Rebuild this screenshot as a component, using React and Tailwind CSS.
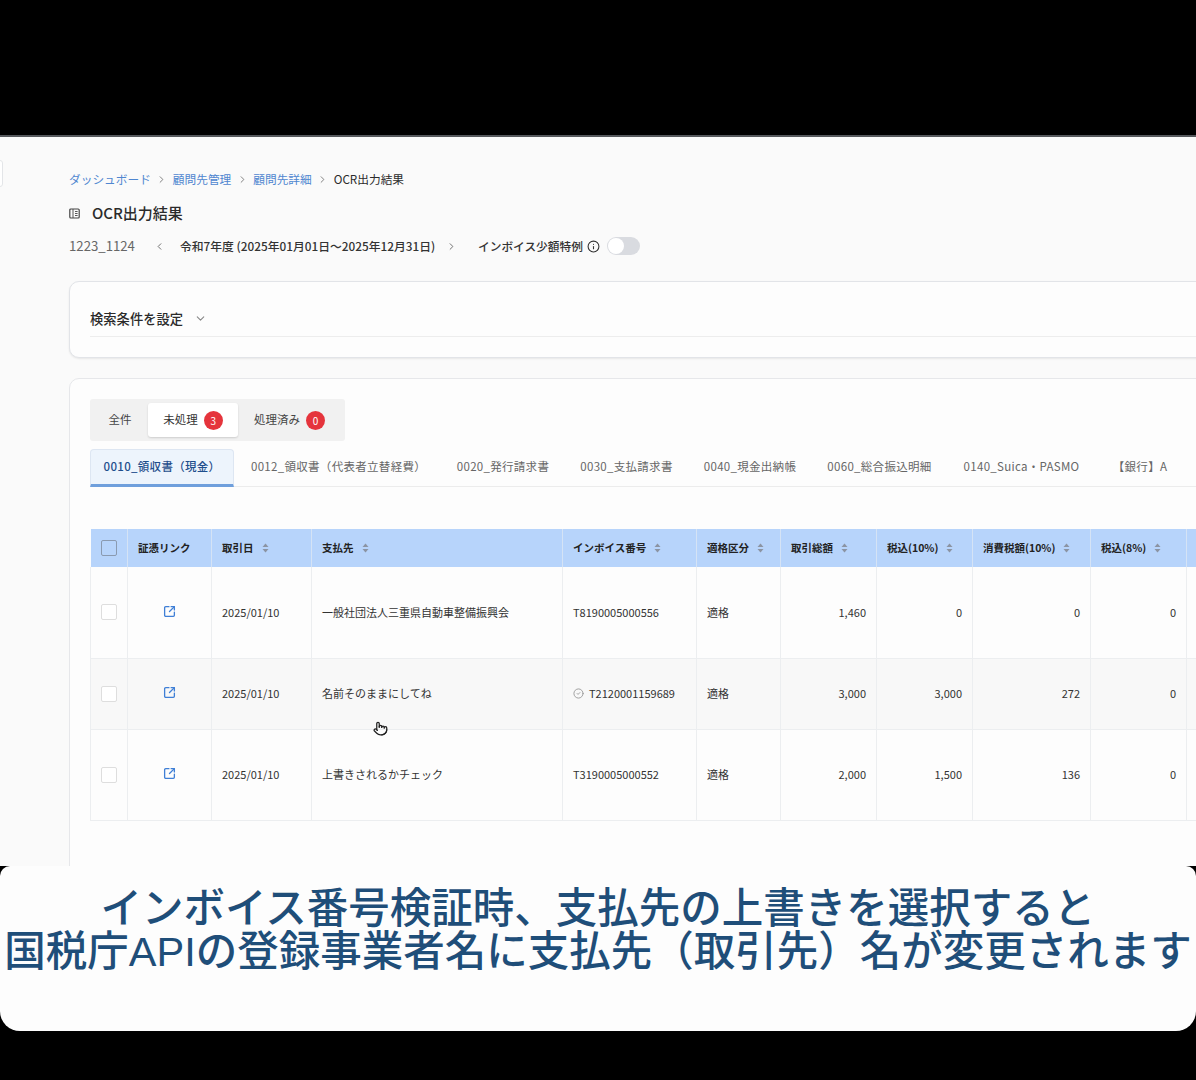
import React from 'react';
import { ChevronRight, ChevronLeft, ChevronDown, Info, CircleCheck, Pointer, SquareArrowOutUpRight } from 'lucide-react';

const columns = [
  { label: '', width: 'w-[37px]' },
  { label: '証憑リンク', width: 'w-[84px]' },
  { label: '取引日', width: 'w-[100px]', sort: true },
  { label: '支払先', width: 'w-[251px]', sort: true },
  { label: 'インボイス番号', width: 'w-[134px]', sort: true },
  { label: '適格区分', width: 'w-[84px]', sort: true },
  { label: '取引総額', width: 'w-[96px]', sort: true },
  { label: '税込(10%)', width: 'w-[96px]', sort: true },
  { label: '消費税額(10%)', width: 'w-[118px]', sort: true },
  { label: '税込(8%)', width: 'w-[96px]', sort: true },
  { label: '', width: 'w-[120px]' },
];

const rows = [
  { height: 'h-[91px]', bg: '', payee: '一般社団法人三重県自動車整備振興会', invoice: 'T8190005000556', total: '1,460', tax10: '0', ctax10: '0', tax8: '0' },
  { height: 'h-[71px]', bg: 'bg-[#f8f8f8]', payee: '名前そのままにしてね', invoice: 'T2120001159689', verified: true, total: '3,000', tax10: '3,000', ctax10: '272', tax8: '0' },
  { height: 'h-[91px]', bg: '', payee: '上書きされるかチェック', invoice: 'T3190005000552', total: '2,000', tax10: '1,500', ctax10: '136', tax8: '0' },
];

const docTabs = [
  { label: '0012_領収書（代表者立替経費）', width: 'w-[203px] pl-[6px]' },
  { label: '0020_発行請求書', width: 'w-[132px]' },
  { label: '0030_支払請求書', width: 'w-[115px]' },
  { label: '0040_現金出納帳', width: 'w-[132px]' },
  { label: '0060_総合振込明細', width: 'w-[127px]' },
  { label: '0140_Suica・PASMO', width: 'w-[157px]' },
  { label: '【銀行】A', width: 'w-[80px]' },
];

const SortIcon = () => (
  <svg width="7" height="10" viewBox="0 0 7 10" className="ml-2 shrink-0">
    <path d="M3.5 0.5 L6.5 4 H0.5 Z" fill="#8b94a3" />
    <path d="M3.5 9.5 L6.5 6 H0.5 Z" fill="#8b94a3" />
  </svg>
);

const TitleIcon = () => (
  <svg width="11" height="11" viewBox="0 0 11 11" fill="none" stroke="#444" strokeWidth="1.2">
    <rect x="0.8" y="1" width="9.4" height="9" rx="1" />
    <path d="M4 1v9M6 3.5h2.6M6 5.5h2.6M6 7.5h2.6" strokeWidth="0.9" />
  </svg>
);

const Badge = ({ n }) => (
  <span className="ml-[6px] w-[19px] h-[19px] rounded-full bg-[#e5343c] text-white text-[10px] flex items-center justify-center">{n}</span>
);

const App = () => {
  return (
    <div className="w-[1196px] h-[1080px] bg-black overflow-hidden pt-[135px] font-['Noto_Sans_CJK_JP','Noto_Sans',sans-serif]">
      <div className="h-[896px] rounded-b-[20px] overflow-hidden flex flex-col border-t-2 border-[#55585c]">
        {/* screen recording */}
        <div className="relative h-[729px] shrink-0 overflow-hidden bg-[#fafafa] pl-[69px] pt-[34px]">
          <div className="absolute left-[-8px] top-[23px] w-[11px] h-[27px] rounded-[3px] border border-[#e3e5e8] bg-white" />

          <nav className="h-4 flex items-center text-[11.7px] leading-4">
            <span className="text-[#4f86d0]">ダッシュボード</span>
            <ChevronRight size={11} className="mx-[5.5px] text-[#777]" />
            <span className="text-[#4f86d0]">顧問先管理</span>
            <ChevronRight size={11} className="mx-[5.5px] text-[#777]" />
            <span className="text-[#4f86d0]">顧問先詳細</span>
            <ChevronRight size={11} className="mx-[5.5px] text-[#777]" />
            <span className="text-[#2b2b2b]">OCR出力結果</span>
          </nav>

          <div className="mt-[14px] h-6 flex items-center">
            <TitleIcon />
            <h1 className="ml-3 text-[15px] font-medium text-[#2b2b2b]">OCR出力結果</h1>
          </div>

          <div className="mt-[11px] h-5 flex items-center">
            <span className="w-[85px] text-[13.2px] text-[#666]">1223_1124</span>
            <ChevronLeft size={11} className="text-[#666]" />
            <span className="ml-[15px] w-[266px] text-[11.8px] font-medium text-[#333] whitespace-nowrap">令和7年度 (2025年01月01日〜2025年12月31日)</span>
            <ChevronRight size={11} className="text-[#666]" />
            <span className="ml-[21px] text-[11.7px] font-medium text-[#333] whitespace-nowrap">インボイス少額特例</span>
            <Info size={13} className="ml-[4px] text-[#333]" />
            <span className="ml-[7px] w-[33px] h-[18px] rounded-full bg-[#d9dbe0] p-[1px]">
              <span className="block w-4 h-4 rounded-full bg-white" />
            </span>
          </div>

          <section className="mt-[25px] w-[1300px] h-[77px] rounded-[10px] border border-[#e2e4e8] bg-[#fdfdfd] shadow-[0_1px_2px_rgba(0,0,0,0.08)] pl-5 pr-5 pt-[27px]">
            <div className="h-[28px] border-b border-[#ededed] flex items-start">
              <span className="text-[13.3px] font-medium text-[#2b2b2b] leading-[20px]">検索条件を設定</span>
              <ChevronDown size={13} className="ml-[11px] mt-[3px] text-[#888]" />
            </div>
          </section>

          <section className="mt-[20px] w-[1300px] h-[600px] rounded-[10px] border border-[#e6e7ea] bg-[#fdfdfd] pl-5 pt-5">
            <div className="w-[255px] h-[42px] rounded-[3px] bg-[#f1f1f1] flex items-center pl-[4px] text-[11.5px] text-[#444]">
              <span className="w-[52px] text-center">全件</span>
              <span className="ml-[2px] w-[90px] h-[34px] rounded-[3px] bg-white shadow-[0_1px_2px_rgba(0,0,0,0.15)] flex items-center justify-center text-[#333]">
                未処理<Badge n={3} />
              </span>
              <span className="ml-4 flex items-center">
                処理済み<Badge n={0} />
              </span>
            </div>

            <div className="mt-2 h-[38px] border-b border-[#ececec] flex items-stretch text-[11.5px] tracking-[0.3px] text-[#666]">
              <div className="w-[144px] -mb-px pb-px rounded-t-[4px] border border-b-0 border-[#dde6f2] bg-[#edf4fc] border-b-[3px] border-b-[#6f9fdc] flex items-center justify-center font-medium text-[#1f4e8c] whitespace-nowrap">
                0010_領収書（現金）
              </div>
              {docTabs.map((tab) => (
                <div key={tab.label} className={`${tab.width} pb-[2px] flex items-center justify-center whitespace-nowrap`}>
                  {tab.label}
                </div>
              ))}
            </div>

            <table className="mt-[42px] table-fixed border-collapse w-[1216px] text-[11px] text-[#333]">
              <thead>
                <tr className="h-[38px] bg-[#b7d4fb]">
                  {columns.map((col, i) => (
                    <th key={i} className={`${col.width} border-r border-[#d5e3f5] px-[10px] text-left font-semibold`}>
                      {i === 0 ? (
                        <span className="block w-[16px] h-[16px] rounded-[2px] border border-[#8a9ab0]" />
                      ) : (
                        <span className="flex items-center whitespace-nowrap text-[10.5px] text-[#222]">
                          {col.label}
                          {col.sort && <SortIcon />}
                        </span>
                      )}
                    </th>
                  ))}
                </tr>
              </thead>
              <tbody>
                {rows.map((row) => (
                  <tr key={row.invoice} className={`${row.height} ${row.bg} border-b border-[#eceef0]`}>
                    <td className="border-x border-[#eceef0] px-[10px]">
                      <span className="block w-[16px] h-[16px] rounded-[2px] border border-[#dedede] bg-white" />
                    </td>
                    <td className="border-r border-[#eceef0]">
                      <SquareArrowOutUpRight size={13} className="mx-auto -mt-[2px] text-[#3f7fd6]" strokeWidth={2.4} />
                    </td>
                    <td className="border-r border-[#eceef0] px-[10px]">2025/01/10</td>
                    <td className="border-r border-[#eceef0] px-[10px] whitespace-nowrap">{row.payee}</td>
                    <td className="border-r border-[#eceef0] px-[10px]">
                      <span className="flex items-center whitespace-nowrap">
                        {row.verified && <CircleCheck size={11} className="mr-[5px] text-[#999]" />}
                        {row.invoice}
                      </span>
                    </td>
                    <td className="border-r border-[#eceef0] px-[10px]">適格</td>
                    <td className="border-r border-[#eceef0] px-[10px] text-right">{row.total}</td>
                    <td className="border-r border-[#eceef0] px-[10px] text-right">{row.tax10}</td>
                    <td className="border-r border-[#eceef0] px-[10px] text-right">{row.ctax10}</td>
                    <td className="border-r border-[#eceef0] px-[10px] text-right">{row.tax8}</td>
                    <td />
                  </tr>
                ))}
              </tbody>
            </table>
          </section>

          {/* mouse cursor */}
          <Pointer size={15} className="absolute left-[373px] top-[584px] text-[#222]" />
        </div>

        {/* caption */}
        <div className="h-[165px] shrink-0 bg-[#fdfdfd] rounded-t-[10px] pt-[21px] text-center font-['Liberation_Sans','Noto_Sans_CJK_JP',sans-serif] font-medium text-[41.5px] leading-[43px] text-[#1f4e79] whitespace-nowrap">
          <p>インボイス番号検証時、支払先の上書きを選択すると</p>
          <p>国税庁APIの登録事業者名に支払先（取引先）名が変更されます</p>
        </div>
      </div>
    </div>
  );
};

export default App;
